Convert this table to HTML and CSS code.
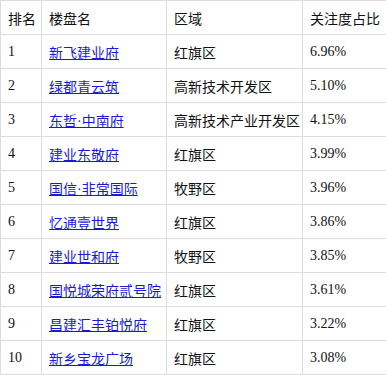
FILE: index.html
```html
<!DOCTYPE html>
<html lang="zh">
<head>
<meta charset="utf-8">
<link rel="stylesheet" href="styles.css">
</head>
<body>
<table class="rank">
  <colgroup>
    <col class="c1"><col class="c2"><col class="c3"><col class="c4">
  </colgroup>
  <thead>
    <tr><th>排名</th><th>楼盘名</th><th>区域</th><th>关注度占比</th></tr>
  </thead>
  <tbody>
    <tr><td>1</td><td><a href="#">新飞建业府</a></td><td>红旗区</td><td>6.96%</td></tr>
    <tr><td>2</td><td><a href="#">绿都青云筑</a></td><td>高新技术开发区</td><td>5.10%</td></tr>
    <tr><td>3</td><td><a href="#">东哲·中南府</a></td><td>高新技术产业开发区</td><td>4.15%</td></tr>
    <tr><td>4</td><td><a href="#">建业东敬府</a></td><td>红旗区</td><td>3.99%</td></tr>
    <tr><td>5</td><td><a href="#">国信·非常国际</a></td><td>牧野区</td><td>3.96%</td></tr>
    <tr><td>6</td><td><a href="#">忆通壹世界</a></td><td>红旗区</td><td>3.86%</td></tr>
    <tr><td>7</td><td><a href="#">建业世和府</a></td><td>牧野区</td><td>3.85%</td></tr>
    <tr><td>8</td><td><a href="#">国悦城荣府贰号院</a></td><td>红旗区</td><td>3.61%</td></tr>
    <tr><td>9</td><td><a href="#">昌建汇丰铂悦府</a></td><td>红旗区</td><td>3.22%</td></tr>
    <tr><td>10</td><td><a href="#">新乡宝龙广场</a></td><td>红旗区</td><td>3.08%</td></tr>
  </tbody>
</table>
</body>
</html>
```
FILE: styles.css
```css
html, body {
  margin: 0;
  padding: 0;
  background: #fff;
}
.rank {
  border-collapse: collapse;
  table-layout: fixed;
  width: 386px;
  font-family: "Liberation Serif", "Noto Sans CJK SC", serif;
  font-size: 14px;
  color: #111;
}
.c1 { width: 41px; }
.c2 { width: 125px; }
.c3 { width: 136px; }
.c4 { width: 84px; }
.rank th, .rank td {
  border: 1px solid #ddd;
  height: 33px;
  padding: 0 0 0 7px;
  text-align: left;
  vertical-align: middle;
  font-weight: normal;
  white-space: nowrap;
}
.rank th {
  font-family: "Noto Sans CJK SC", sans-serif;
}
.rank a {
  color: #1a1ad6;
  text-decoration: underline;
}
```
